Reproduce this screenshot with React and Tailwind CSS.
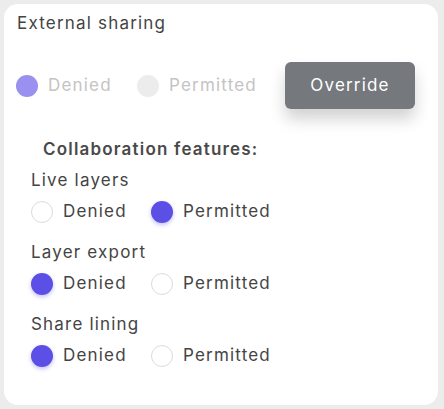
import React from "react";

const Radio = ({ checked, disabled, label }) => {
  let dot = "border border-[#dcdcdc] bg-white";
  if (checked && disabled) dot = "bg-[#9a90f0]";
  else if (checked) dot = "bg-[#5b4fe6] shadow-[0_2px_4px_rgba(91,79,230,0.35)]";
  else if (disabled) dot = "bg-[#ececec]";
  return (
    <div className="flex items-center gap-[10px]">
      <span className={`shrink-0 w-[22px] h-[22px] rounded-full ${dot}`} />
      <span className={disabled ? "text-[#c4c4c4]" : "text-[#444]"}>{label}</span>
    </div>
  );
};

const Setting = ({ title, value }) => (
  <div className="flex flex-col">
    <div className="text-[#444] leading-[20px]">{title}</div>
    <div className="flex items-center mt-[11px] h-[22px]">
      <div className="w-[120px]">
        <Radio checked={value === "denied"} label="Denied" />
      </div>
      <Radio checked={value === "permitted"} label="Permitted" />
    </div>
  </div>
);

const App = () => {
  return (
    <div
      className="w-[444px] h-[409px] bg-[#ececec] pt-[4px] pl-[4px]"
      style={{ fontFamily: 'Inter, "Open Sans", sans-serif' }}
    >
      <div className="w-[434px] h-[401px] bg-white rounded-[14px] text-[17px] tracking-[0.07em]">
        <div className="pl-[13px] pt-[9px] leading-[20px] text-[#444]">External sharing</div>

        <div className="flex items-center pl-[12px] mt-[29px]">
          <div className="w-[121px]">
            <Radio checked disabled label="Denied" />
          </div>
          <div className="w-[148px]">
            <Radio disabled label="Permitted" />
          </div>
          <button className="w-[130px] h-[47px] rounded-[6px] bg-[#75787c] text-white tracking-[0.07em] shadow-[0_10px_16px_rgba(0,0,0,0.18)]">
            Override
          </button>
        </div>

        <div className="pl-[39px] mt-[30px] font-semibold text-[#4a4a4a] leading-[20px]">
          Collaboration features:
        </div>

        <div className="pl-[27px] mt-[11px] flex flex-col gap-[19px]">
          <Setting title="Live layers" value="permitted" />
          <Setting title="Layer export" value="denied" />
          <Setting title="Share lining" value="denied" />
        </div>
      </div>
    </div>
  );
};

export default App;
